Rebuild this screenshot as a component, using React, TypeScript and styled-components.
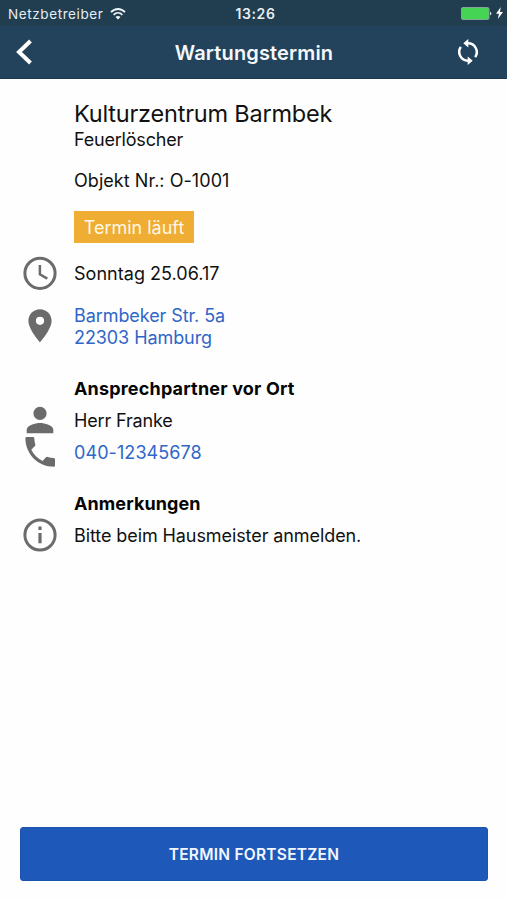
import React from "react";
import styled, { createGlobalStyle } from "styled-components";

const GlobalStyle = createGlobalStyle`
  * { box-sizing: border-box; }
  body {
    margin: 0;
    background: #fefefe;
    font-family: Inter, "Liberation Sans", sans-serif;
    color: #111;
  }
`;

const Screen = styled.div`
  width: 507px;
  height: 900px;
  display: flex;
  flex-direction: column;
  overflow: hidden;
  background: #fefefe;
`;

const StatusBar = styled.div`
  height: 26px;
  flex: none;
  display: grid;
  grid-template-columns: 1fr auto 1fr;
  align-items: center;
  padding: 2px 4px 0 8px;
  background: #213d50;
  color: #e6edf2;
  font-size: 13.5px;
  line-height: 24px;
`;

const Carrier = styled.div`
  display: flex;
  align-items: center;
  gap: 7px;
  letter-spacing: 0.6px;
`;

const Clock = styled.div`
  font-size: 14px;
  font-weight: 600;
  letter-spacing: 0.6px;
`;

const Power = styled.div`
  display: flex;
  justify-content: flex-end;
  align-items: center;
  gap: 4px;
  padding-bottom: 2px;
`;

const NavBar = styled.header`
  height: 53px;
  flex: none;
  display: grid;
  grid-template-columns: 50px 1fr 50px;
  align-items: center;
  padding: 0 14px;
  background: #23425b;
  border-bottom: 1px solid #1d3950;
  color: #fff;
`;

const NavTitle = styled.h1`
  margin: 0;
  padding: 1px 0 0 1px;
  text-align: center;
  font-size: 20px;
  font-weight: 600;
  letter-spacing: 0.14px;
  color: #f4f8fb;
`;

const NavButton = styled.button<{ $end?: boolean }>`
  display: flex;
  justify-content: ${(p) => (p.$end ? "flex-end" : "flex-start")};
  padding: 0 ${(p) => (p.$end ? "11px" : "0")} 0 0;
  border: 0;
  background: none;
  color: inherit;
`;

const Details = styled.main`
  flex: 1;
  padding: 22px 20px 0;
`;

const Indented = styled.div`
  padding-left: 54px;
`;

const ObjectName = styled.h2`
  margin: 0;
  font-size: 23.5px;
  font-weight: 400;
  line-height: 26px;
  letter-spacing: -0.21px;
`;

const Line = styled.div<{ $top?: number; $spacing?: number }>`
  margin-top: ${(p) => p.$top ?? 0}px;
  padding-top: 1px;
  font-size: 18px;
  line-height: 23px;
  letter-spacing: ${(p) => p.$spacing ?? 0}px;
`;

const Badge = styled.span`
  display: flex;
  align-items: center;
  justify-content: center;
  width: 120px;
  height: 32px;
  margin-top: 19px;
  background: #efad33;
  color: #fff8e6;
  font-size: 18px;
`;

const Row = styled.div<{ $top?: number; $height?: number }>`
  display: grid;
  grid-template-columns: 40px 1fr;
  column-gap: 14px;
  align-items: center;
  height: ${(p) => p.$height ?? 32}px;
  margin-top: ${(p) => p.$top ?? 0}px;
`;

const IconSlot = styled.span`
  display: flex;
  align-items: center;
  height: 0;
  color: #6b6b6b;

  svg {
    flex: none;
  }
`;

const RowText = styled.span<{ $spacing?: number }>`
  padding-top: 2px;
  font-size: 18px;
  line-height: 22px;
  letter-spacing: ${(p) => p.$spacing ?? 0}px;
`;

const RowLink = styled(RowText).attrs({ as: "a" })`
  color: #2f66c8;
`;

const SectionTitle = styled.h3<{ $top: number; $spacing?: number }>`
  margin: ${(p) => p.$top}px 0 4px;
  padding-left: 54px;
  font-size: 18px;
  font-weight: 700;
  line-height: 22px;
  letter-spacing: ${(p) => p.$spacing ?? 0}px;
  color: #050505;
`;

const Footer = styled.footer`
  flex: none;
  padding: 0 19px 19px 20px;
`;

const PrimaryButton = styled.button`
  display: block;
  width: 100%;
  height: 54px;
  border: 1px solid #1b54ae;
  border-radius: 3px;
  background: #1e59b9;
  color: #f3f7ff;
  font-family: inherit;
  font-size: 15.5px;
  font-weight: 600;
  letter-spacing: 0.25px;
`;

const WifiIcon = () => (
  <svg width="16" height="12" viewBox="0 0 16 12" fill="none" stroke="#eef3f6">
    <path d="M1 4.2C5-.1 11-.1 15 4.2" strokeWidth="1.8" />
    <path d="M3.6 6.9c2.6-2.6 6.2-2.6 8.8 0" strokeWidth="1.7" />
    <path d="M8 11.6 5.5 8.9c1.5-1.3 3.5-1.3 5 0z" fill="#eef3f6" stroke="none" />
  </svg>
);

const BatteryIcon = () => (
  <svg width="31" height="13" viewBox="0 0 31 13">
    <rect x="0.5" y="0.5" width="27.5" height="12" rx="1.5" fill="#46d455" stroke="#7fa79a" />
    <path d="M29 4.7c1.8.3 1.8 3.3 0 3.6z" fill="#dce6ea" />
  </svg>
);

const BoltIcon = () => (
  <svg width="7" height="12" viewBox="0 0 7 12">
    <path d="M4.8 0 0 6.8h2.9L1.9 12 7 4.9H4z" fill="#fff" />
  </svg>
);

const BackIcon = () => (
  <svg width="20" height="26" viewBox="0 0 20 26" fill="none" stroke="#fff" strokeWidth="4">
    <path d="M16.5 2 5 13l11.5 11" />
  </svg>
);

const SyncIcon = () => (
  <svg width="28" height="28" viewBox="0 0 28 28" fill="none" stroke="currentColor" strokeWidth="2.5">
    <path d="M13 5.3h1a8.8 8.8 0 0 1 7.2 13.8" />
    <path d="M15 22.7h-1A8.8 8.8 0 0 1 6.8 8.9" />
    <path d="M14.3.9v8.6L9.3 5.2zM13.7 27.1v-8.6l5 4.3z" fill="currentColor" stroke="none" />
  </svg>
);

const ClockIcon = () => (
  <svg width="40" height="40" viewBox="0 0 40 40" fill="none" stroke="currentColor">
    <circle cx="20" cy="20.3" r="15.1" strokeWidth="3" />
    <path d="M19.9 12v9.3l7.4 4.3" strokeWidth="2.5" />
  </svg>
);

const PinIcon = () => (
  <svg width="40" height="40" viewBox="0 0 40 40" fill="currentColor">
    <path
      fillRule="evenodd"
      d="M20 3.3c-6.4 0-11.6 5.1-11.6 11.5C8.4 23.5 20 36.4 20 36.4s11.6-12.9 11.6-21.6C31.6 8.4 26.4 3.3 20 3.3zm0 15.6a4.1 4.1 0 1 1 0-8.2 4.1 4.1 0 0 1 0 8.2z"
    />
  </svg>
);

const PersonIcon = () => (
  <svg width="40" height="40" viewBox="0 0 40 40" fill="currentColor">
    <circle cx="20" cy="13.4" r="6.6" />
    <path d="M6.7 33.2v-3.4c0-4.4 8.7-6.7 13.3-6.7s13.3 2.3 13.3 6.7v3.4z" />
  </svg>
);

const PhoneIcon = () => (
  <svg width="40" height="40" viewBox="0 0 40 40" fill="currentColor">
    <path d="M5.4 6.2Q5.4 5 6.6 5H13q1.2 0 1.3 1.2c.1 2.2.4 4.2 1 6.2q.3 1-.4 1.7l-3.6 3.6c2.5 5 6.2 8.7 11.2 11.2l3.5-3.6q.8-.7 1.8-.4c2 .6 4 1 6 1q1.2.1 1.2 1.3v6.3q0 1.2-1.2 1.2C18 34.7 5.4 22 5.4 6.2z" />
  </svg>
);

const InfoIcon = () => (
  <svg width="40" height="40" viewBox="0 0 40 40" fill="none" stroke="currentColor">
    <circle cx="20" cy="20" r="15.1" strokeWidth="3" />
    <path d="M20 11.6v3.3M20 17.9v10.3" strokeWidth="3.2" />
  </svg>
);

export default function App() {
  return (
    <Screen>
      <GlobalStyle />
      <StatusBar>
        <Carrier>
          Netzbetreiber
          <WifiIcon />
        </Carrier>
        <Clock>13:26</Clock>
        <Power>
          <BatteryIcon />
          <BoltIcon />
        </Power>
      </StatusBar>
      <NavBar>
        <NavButton aria-label="Zurück">
          <BackIcon />
        </NavButton>
        <NavTitle>Wartungstermin</NavTitle>
        <NavButton $end aria-label="Aktualisieren">
          <SyncIcon />
        </NavButton>
      </NavBar>
      <Details>
        <Indented>
          <ObjectName>Kulturzentrum Barmbek</ObjectName>
          <Line $spacing={-0.2}>Feuerlöscher</Line>
          <Line $top={17} $spacing={0.05}>Objekt Nr.: O-1001</Line>
          <Badge>Termin läuft</Badge>
        </Indented>
        <Row $top={14}>
          <IconSlot><ClockIcon /></IconSlot>
          <RowText $spacing={0.03}>Sonntag 25.06.17</RowText>
        </Row>
        <Row $top={14} $height={44}>
          <IconSlot><PinIcon /></IconSlot>
          <RowLink $spacing={-0.08}>
            Barmbeker Str. 5a
            <br />
            22303 Hamburg
          </RowLink>
        </Row>
        <SectionTitle $top={31} $spacing={0.18}>Ansprechpartner vor Ort</SectionTitle>
        <Row>
          <IconSlot><PersonIcon /></IconSlot>
          <RowText $spacing={-0.15}>Herr Franke</RowText>
        </Row>
        <Row>
          <IconSlot><PhoneIcon /></IconSlot>
          <RowLink $spacing={0.08}>040-12345678</RowLink>
        </Row>
        <SectionTitle $top={25} $spacing={0.1}>Anmerkungen</SectionTitle>
        <Row>
          <IconSlot><InfoIcon /></IconSlot>
          <RowText $spacing={-0.09}>Bitte beim Hausmeister anmelden.</RowText>
        </Row>
      </Details>
      <Footer>
        <PrimaryButton>TERMIN FORTSETZEN</PrimaryButton>
      </Footer>
    </Screen>
  );
}
